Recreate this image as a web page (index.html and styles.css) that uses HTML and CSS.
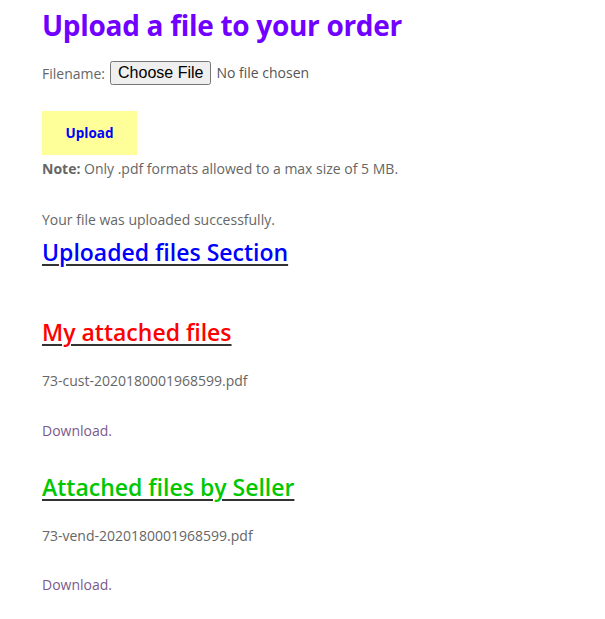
FILE: index.html
```html
<!DOCTYPE html>
<html>
<head>
<meta charset="utf-8">
<link rel="stylesheet" href="styles.css">
</head>
<body>
<div class="page">
  <h1 class="title">Upload a file to your order</h1>
  <div class="file-row">
    <label class="file-label">Filename:</label>
    <input class="file-input" type="file">
  </div>
  <button class="upload-btn">Upload</button>
  <p class="line note-line"><b>Note:</b> Only .pdf formats allowed to a max size of 5 MB.</p>
  <p class="line success-line">Your file was uploaded successfully.</p>
  <h2 class="section sec-uploaded"><u><span class="blue">Uploaded files Section</span></u></h2>
  <h2 class="section sec-mine"><u><span class="red">My attached files</span></u></h2>
  <p class="line file-line">73-cust-2020180001968599.pdf</p>
  <p class="line dl-line"><a class="dl" href="#">Download.</a></p>
  <h2 class="section sec-seller"><u><span class="green">Attached files by Seller</span></u></h2>
  <p class="line file-line">73-vend-2020180001968599.pdf</p>
  <p class="line dl-line2"><a class="dl" href="#">Download.</a></p>
</div>
</body>
</html>
```
FILE: styles.css
```css
body {
  margin: 0;
  background: #fff;
  font-family: "Open Sans", sans-serif;
  color: #666;
}
.page {
  padding-left: 42px;
  display: flex;
  flex-direction: column;
  align-items: flex-start;
}
.title {
  font-size: 28px;
  line-height: 36px;
  font-weight: 700;
  color: #7000ff;
  margin: 7px 0 0;
  letter-spacing: -0.3px;
}
.file-row {
  margin-top: 18px;
  height: 24px;
  display: flex;
  align-items: center;
  font-size: 14px;
}
.file-label { margin-right: 5px; }
.file-input {
  font-family: "Open Sans", sans-serif;
  font-size: 14px;
  color: #555;
}
.file-input::file-selector-button {
  font-family: "Liberation Sans", Arial, sans-serif;
  font-size: 16px;
  margin-right: 5px;
}
.upload-btn {
  margin-top: 26px;
  width: 95px;
  height: 44px;
  border: none;
  background: #ffff99;
  color: #0000ff;
  font-family: "Open Sans", sans-serif;
  font-weight: 700;
  font-size: 13.5px;
  padding: 0;
}
.line {
  margin: 0;
  font-size: 14px;
  line-height: 20px;
}
.note-line { margin-top: 4px; }
.success-line { margin-top: 31px; }
.section {
  margin: 0;
  font-size: 23px;
  line-height: 30px;
  font-weight: 600;
  color: #333;
}
.section u { text-decoration-thickness: 2px; text-underline-offset: 3px; }
.sec-uploaded { margin-top: 7px; }
.sec-mine { margin-top: 50px; }
.sec-seller { margin-top: 31px; }
.file-line { margin-top: 24px; }
.dl-line { margin-top: 30px; }
.dl-line2 { margin-top: 29px; }
.blue { color: #0000ff; }
.red { color: #ff0000; }
.green { color: #00c800; }
.dl { color: #7a5a8c; text-decoration: none; }
```
